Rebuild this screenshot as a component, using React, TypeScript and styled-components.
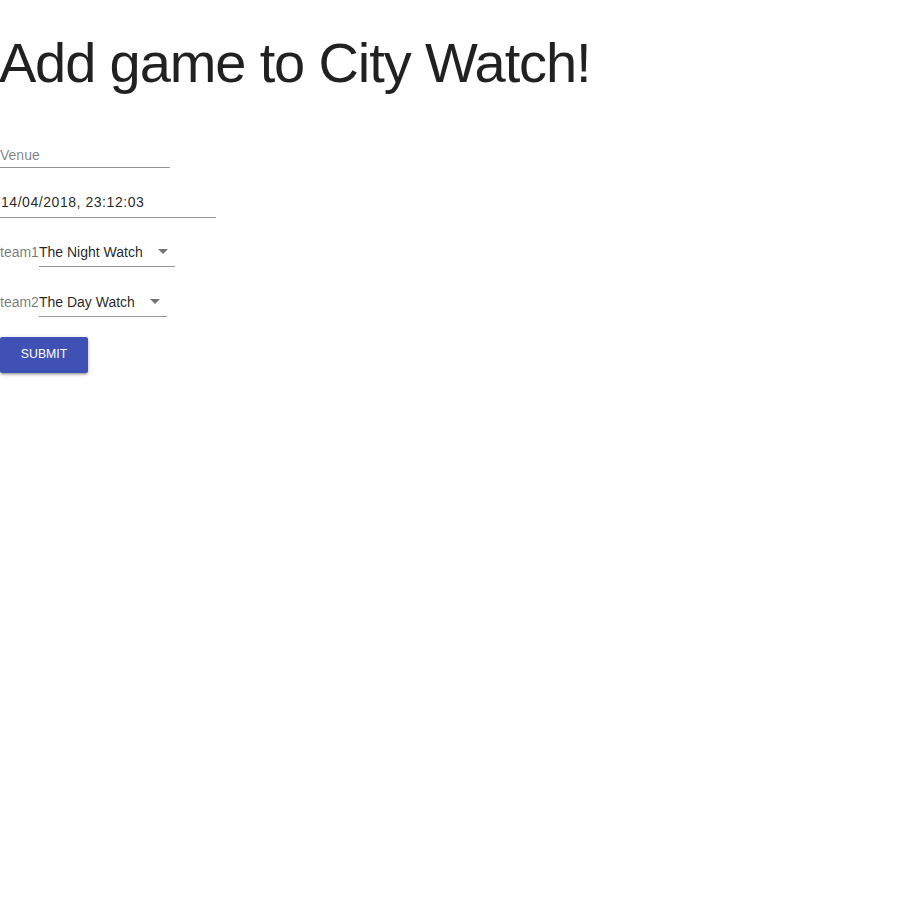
import React from "react";
import styled, { createGlobalStyle } from "styled-components";

const GlobalStyle = createGlobalStyle`
  html, body {
    margin: 0;
    padding: 0;
    background: #ffffff;
  }
  body {
    font-family: "Liberation Sans", Arial, Helvetica, sans-serif;
    color: rgba(0, 0, 0, 0.87);
  }
  html::-webkit-scrollbar {
    width: 15px;
    background: #f1f1f1;
  }
  html::-webkit-scrollbar-track {
    background: #f1f1f1;
  }
  html::-webkit-scrollbar-thumb {
    background: #c1c1c1;
    border: 2px solid #f1f1f1;
    border-top-width: 0;
    border-bottom-width: 0;
    min-height: 40px;
  }
  html::-webkit-scrollbar-button:single-button {
    display: block;
    height: 15px;
    background-color: #f1f1f1;
    background-repeat: no-repeat;
  }
  html::-webkit-scrollbar-button:single-button:vertical:decrement {
    background-image:
      linear-gradient(to bottom right, transparent 50%, #a3a3a3 50%),
      linear-gradient(to bottom left, transparent 50%, #a3a3a3 50%);
    background-size: 4px 4px, 4px 4px;
    background-position: 3px 5px, 7px 5px;
  }
  html::-webkit-scrollbar-button:single-button:vertical:increment {
    background-image:
      linear-gradient(to top right, transparent 50%, #505050 50%),
      linear-gradient(to top left, transparent 50%, #505050 50%);
    background-size: 4px 4px, 4px 4px;
    background-position: 3px 6px, 7px 6px;
  }
`;

const Page = styled.div`
  min-height: 932px;
  display: flex;
  flex-direction: column;
  align-items: flex-start;
`;

const Title = styled.h1`
  margin: 26px 0 0 -0.02em;
  font-size: 56px;
  font-weight: 400;
  line-height: 1.30357em;
  letter-spacing: -0.02em;
  color: rgba(0, 0, 0, 0.87);
`;

const Form = styled.form`
  display: flex;
  flex-direction: column;
  align-items: flex-start;
  margin-top: 37px;
`;

const InputRoot = styled.div<{ $width: number; $gap?: number }>`
  position: relative;
  display: inline-flex;
  width: ${(p) => p.$width}px;
  margin-top: ${(p) => p.$gap ?? 0}px;
  border-bottom: 1px solid rgba(0, 0, 0, 0.42);
`;

const TextInput = styled.input<{ $padTop: number; $padLeft?: number; $spacing?: number }>`
  font: inherit;
  font-size: 14px;
  line-height: 16px;
  height: 16px;
  padding: ${(p) => `${p.$padTop}px 0 ${15 - p.$padTop}px ${p.$padLeft ?? 0}px`};
  letter-spacing: ${(p) => p.$spacing ?? 0}px;
  margin: 0;
  border: 0;
  outline: none;
  background: transparent;
  width: 100%;
  color: rgba(0, 0, 0, 0.87);

  &::placeholder {
    color: rgba(0, 0, 0, 0.5);
    opacity: 1;
    letter-spacing: 0;
  }
`;

const SelectRow = styled.div<{ $gap: number }>`
  display: flex;
  align-items: baseline;
  margin-top: ${(p) => p.$gap}px;
`;

const SelectLabel = styled.label`
  font-size: 14px;
  color: rgba(0, 0, 0, 0.54);
`;

const SelectBox = styled.div`
  position: relative;
  display: inline-flex;
  border-bottom: 1px solid rgba(0, 0, 0, 0.42);
  cursor: pointer;
`;

const SelectValue = styled.div`
  font-size: 14px;
  line-height: 16px;
  height: 16px;
  padding: 9px 32px 6px 0;
  color: rgba(0, 0, 0, 0.87);
  white-space: nowrap;
`;

const ArrowIcon = styled.svg`
  position: absolute;
  right: 0;
  top: calc(50% - 12px);
  width: 24px;
  height: 24px;
  fill: rgba(0, 0, 0, 0.54);
  pointer-events: none;
`;

const SubmitButton = styled.button`
  margin-top: 20px;
  min-width: 88px;
  min-height: 36px;
  padding: 8px 16px;
  border: 0;
  border-radius: 2px;
  background: #3f51b5;
  color: #ffffff;
  font-family: inherit;
  font-size: 12.25px;
  font-weight: 500;
  line-height: 1.4em;
  text-transform: uppercase;
  cursor: pointer;
  box-shadow: 0px 1px 5px 0px rgba(0, 0, 0, 0.2),
    0px 2px 2px 0px rgba(0, 0, 0, 0.14),
    0px 3px 1px -2px rgba(0, 0, 0, 0.12);
`;

const Select: React.FC<{ label: string; value: string; gap: number }> = ({
  label,
  value,
  gap,
}) => (
  <SelectRow $gap={gap}>
    <SelectLabel>{label}</SelectLabel>
    <SelectBox role="button">
      <SelectValue>{value}</SelectValue>
      <ArrowIcon viewBox="0 0 24 24" aria-hidden="true">
        <path d="M7 10l5 5 5-5z" />
      </ArrowIcon>
    </SelectBox>
  </SelectRow>
);

export default function App() {
  return (
    <>
      <GlobalStyle />
      <Page>
        <Title>Add game to City Watch!</Title>
        <Form onSubmit={(e) => e.preventDefault()}>
          <InputRoot $width={170}>
            <TextInput $padTop={11} placeholder="Venue" />
          </InputRoot>
          <InputRoot $width={216} $gap={18}>
            <TextInput
              $padTop={8}
              $padLeft={1}
              $spacing={0.55}
              defaultValue="14/04/2018, 23:12:03"
            />
          </InputRoot>
          <Select label="team1" value="The Night Watch" gap={17} />
          <Select label="team2" value="The Day Watch" gap={18} />
          <SubmitButton type="submit">Submit</SubmitButton>
        </Form>
      </Page>
    </>
  );
}
